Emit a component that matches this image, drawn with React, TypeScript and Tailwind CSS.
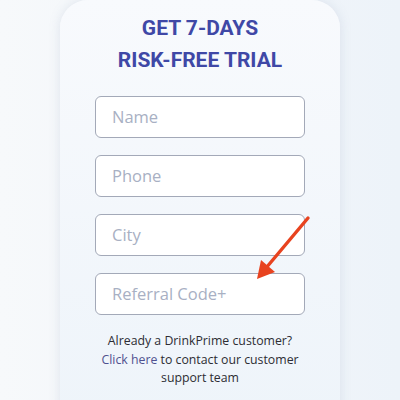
import React from "react";

const fields = ["Name", "Phone", "City", "Referral Code+"];

function Arrow() {
    return (
        <svg className="absolute left-[250px] top-[214px] pointer-events-none" width="64" height="72" viewBox="0 0 64 72">
            <line x1="58" y1="4" x2="16" y2="54" stroke="#e8431f" strokeWidth="3.4" strokeLinecap="round" />
            <polygon points="7,65 11,46 25,58" fill="#e8431f" />
        </svg>
    );
}

export default function App() {
    return (
        <div className="relative h-[400px] w-[400px] overflow-hidden bg-gradient-to-r from-[#f7f9fb] to-[#edf3f9]" style={{ fontFamily: '"Open Sans", sans-serif' }}>
            <div className="mx-[60px] w-[280px] h-[420px] rounded-t-[28px] bg-gradient-to-b from-[#f8fafd] to-[#eef4fa] shadow-[0_0_12px_rgba(120,140,170,0.18)] flex flex-col items-center pt-[12px]">
                <h1 className="text-center text-[21px] leading-[32px] font-bold text-[#3f48a6]" style={{ fontFamily: "Roboto, sans-serif" }}>
                    GET 7-DAYS
                    <br />
                    RISK-FREE TRIAL
                </h1>
                <div className="mt-[20px] flex flex-col gap-[17px]">
                    {fields.map((f) => (
                        <div key={f} className="w-[210px] h-[42px] rounded-[6px] border border-[#a3a9b8] bg-white flex items-center px-[16px] text-[16.5px] text-[#a8b0c3]">
                            {f}
                        </div>
                    ))}
                </div>
                <p className="mt-[17px] w-[230px] text-center text-[12.3px] leading-[18.5px] text-[#2d2d33]">
                    Already a DrinkPrime customer?
                    <br />
                    <span className="text-[#4f518f]">Click here</span> to contact our customer support team
                </p>
            </div>
            <Arrow />
        </div>
    );
}
